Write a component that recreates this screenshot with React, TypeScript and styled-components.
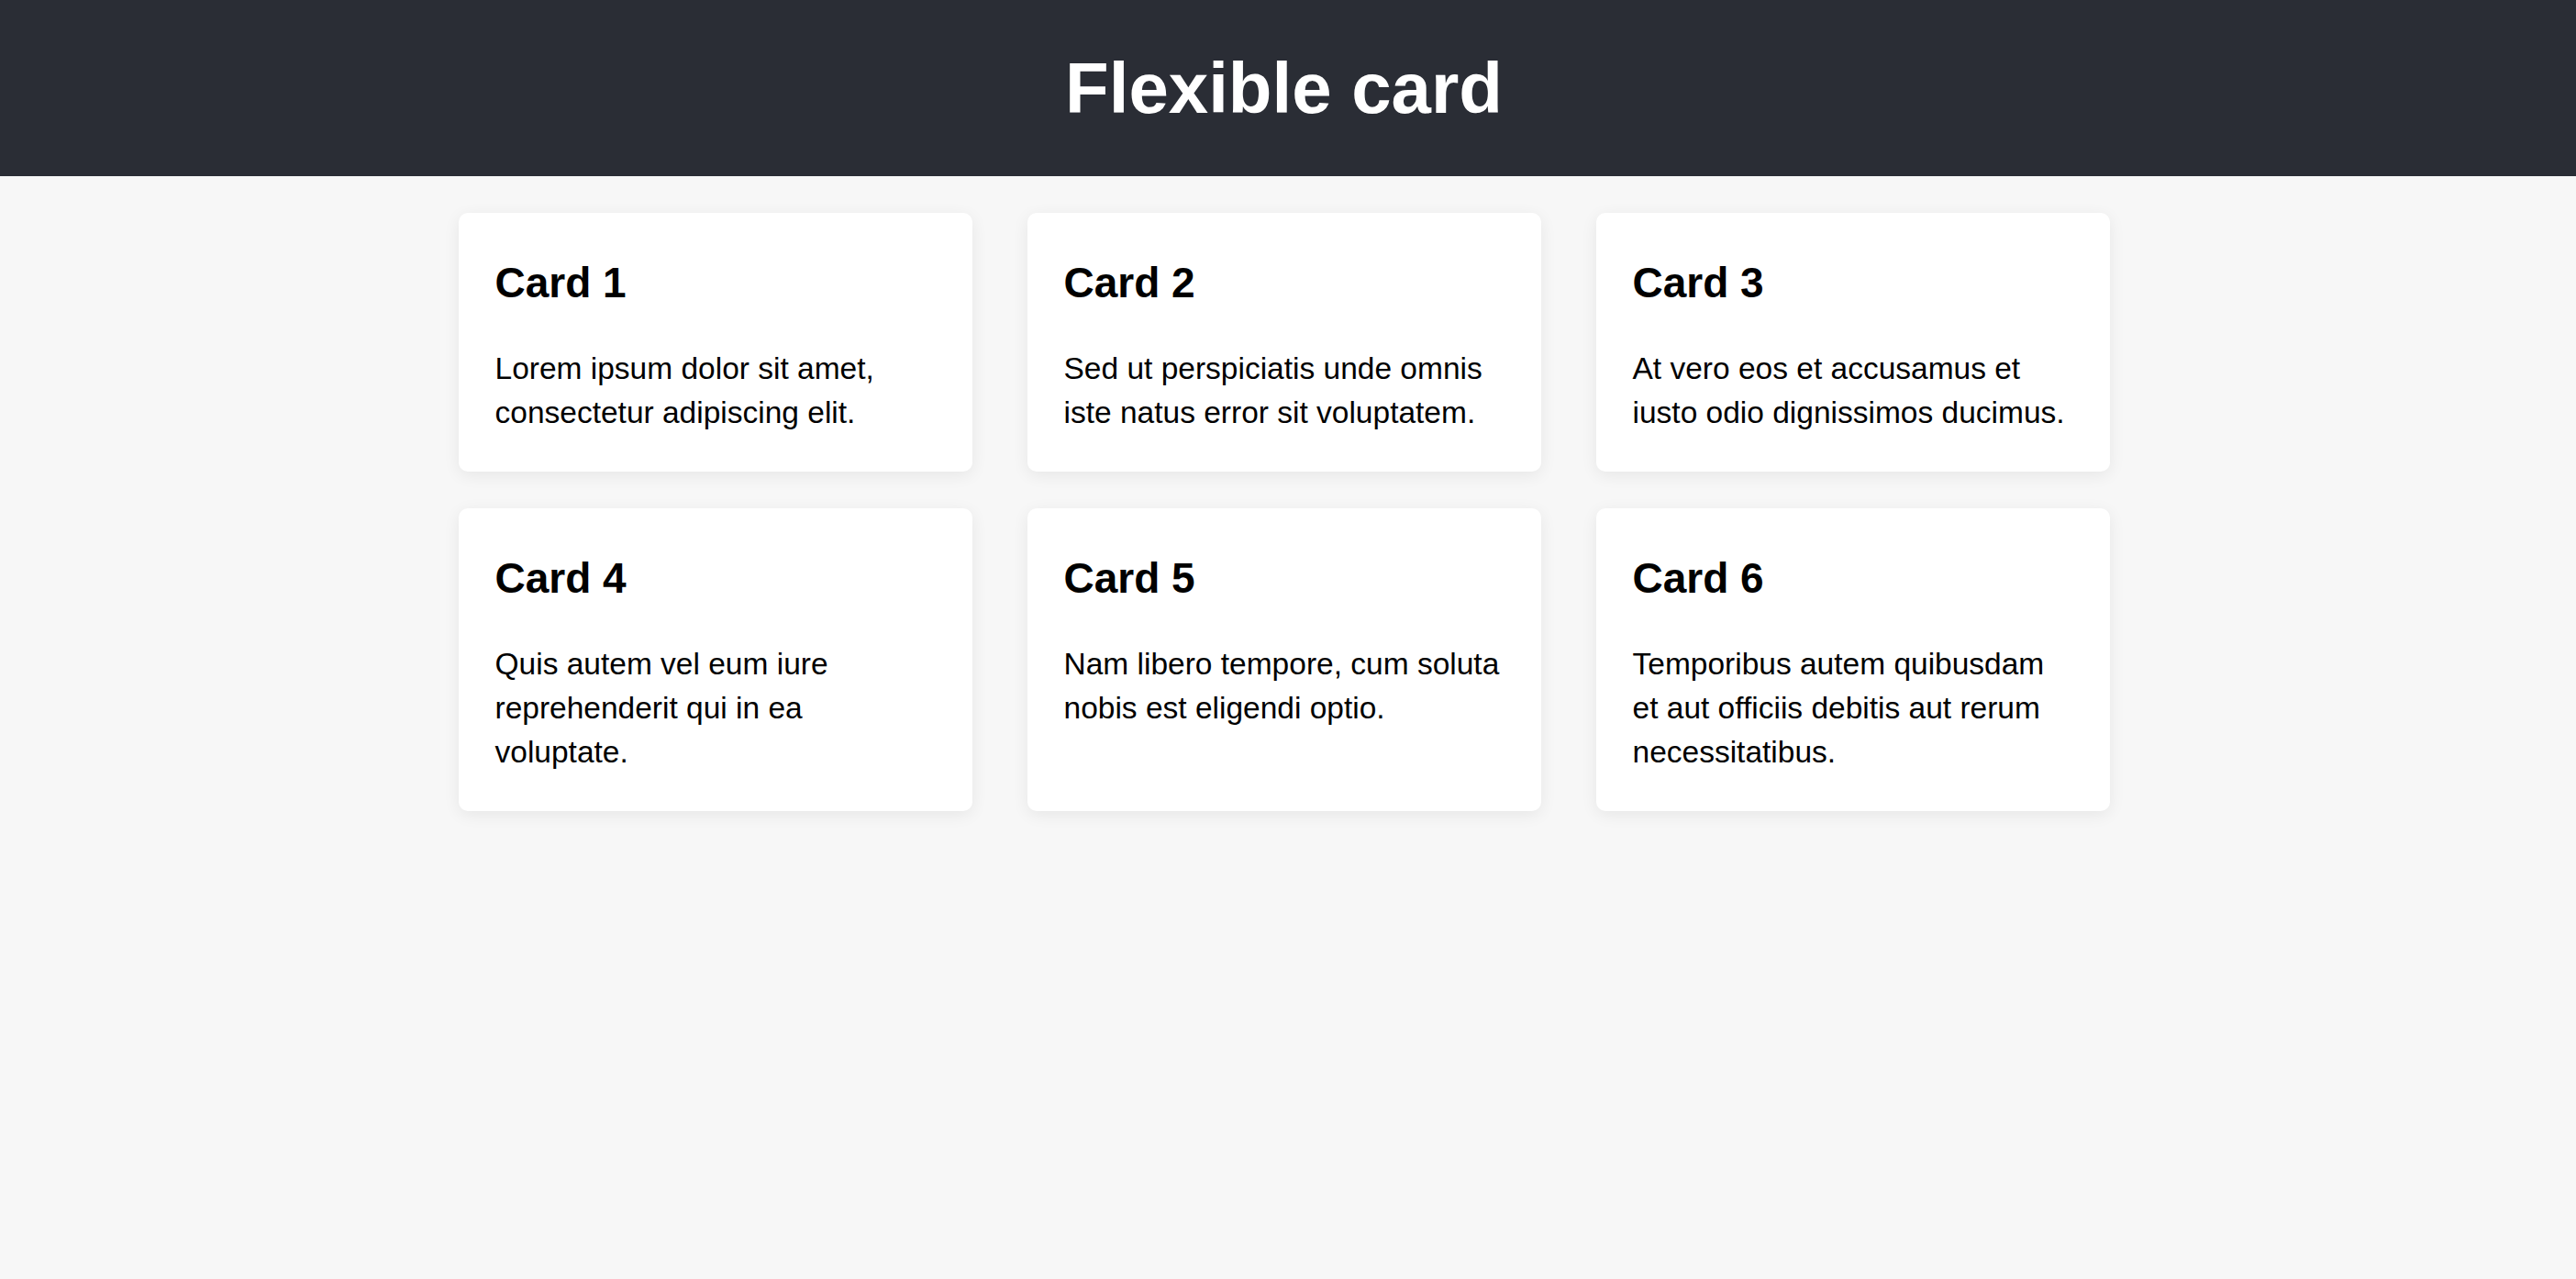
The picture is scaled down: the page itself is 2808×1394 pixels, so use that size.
import styled, { createGlobalStyle } from "styled-components";

const cards = [
  { title: "Card 1", text: "Lorem ipsum dolor sit amet, consectetur adipiscing elit." },
  { title: "Card 2", text: "Sed ut perspiciatis unde omnis iste natus error sit voluptatem." },
  { title: "Card 3", text: "At vero eos et accusamus et iusto odio dignissimos ducimus." },
  { title: "Card 4", text: "Quis autem vel eum iure reprehenderit qui in ea voluptate." },
  { title: "Card 5", text: "Nam libero tempore, cum soluta nobis est eligendi optio." },
  { title: "Card 6", text: "Temporibus autem quibusdam et aut officiis debitis aut rerum necessitatibus." },
];

const GlobalStyle = createGlobalStyle`
  * {
    box-sizing: border-box;
  }

  html,
  body {
    margin: 0;
    padding: 0;
    background: #f7f7f7;
    font-family: "Liberation Sans", Arial, sans-serif;
    color: #000;
  }
`;

const App = () => {
  return (
    <>
      <GlobalStyle />
      <Header>
        <Title>Flexible card</Title>
      </Header>
      <Main>
        <CardGrid>
          {cards.map((card) => (
            <Card key={card.title}>
              <CardTitle>{card.title}</CardTitle>
              <CardText>{card.text}</CardText>
            </Card>
          ))}
        </CardGrid>
      </Main>
    </>
  );
};

const Header = styled.header`
  height: 192px;
  background: #2a2d35;
  display: flex;
  align-items: center;
  justify-content: center;
  padding-right: 9px;
`;

const Title = styled.h1`
  margin: 0;
  color: #fff;
  font-size: 78px;
  font-weight: 700;
  line-height: 1;
`;

const Main = styled.main`
  display: flex;
  justify-content: center;
  padding: 40px 9px 40px 0;
`;

const CardGrid = styled.div`
  display: grid;
  grid-template-columns: repeat(3, 560px);
  column-gap: 60px;
  row-gap: 40px;
`;

const Card = styled.div`
  background: #fff;
  border-radius: 10px;
  padding: 40px;
  box-shadow: 0 4px 18px rgba(0, 0, 0, 0.07);
`;

const CardTitle = styled.h2`
  margin: 0 0 34px;
  font-size: 46px;
  font-weight: 700;
  line-height: 72px;
  color: #000;
`;

const CardText = styled.p`
  margin: 0;
  font-size: 33.5px;
  line-height: 48px;
  color: #000;
`;

export default App;
